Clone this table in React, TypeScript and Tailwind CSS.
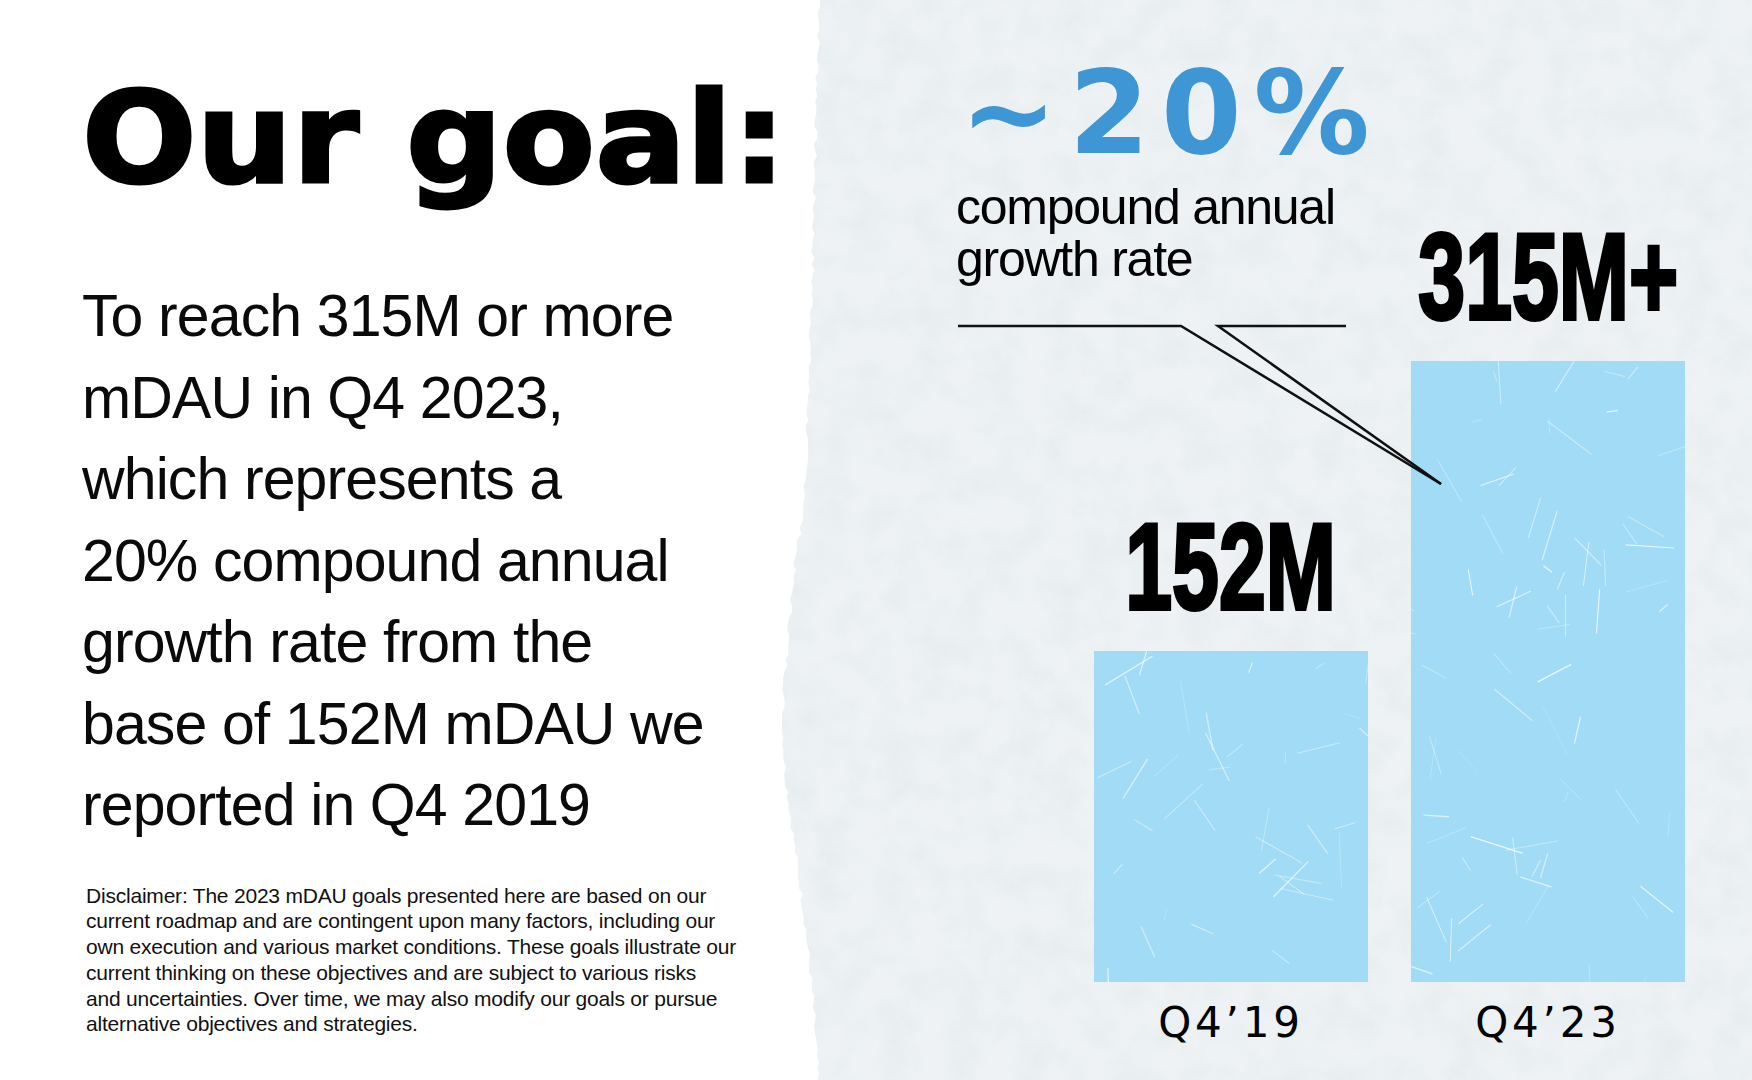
import React from 'react';

const bodyLines = [
  'To reach 315M or more',
  'mDAU in Q4 2023,',
  'which represents a',
  '20% compound annual',
  'growth rate from the',
  'base of 152M mDAU we',
  'reported in Q4 2019',
];

const disclaimerLines = [
  'Disclaimer: The 2023 mDAU goals presented here are based on our',
  'current roadmap and are contingent upon many factors, including our',
  'own execution and various market conditions. These goals illustrate our',
  'current thinking on these objectives and are subject to various risks',
  'and uncertainties. Over time, we may also modify our goals or pursue',
  'alternative objectives and strategies.',
];

// small seeded random so the drawing is the same every load
const rand = (seed: number) => {
  let s = seed;
  return () => {
    s = (s * 9301 + 49297) % 233280;
    return s / 233280;
  };
};

// torn paper edge, points given as [x, y] inside the 40px strip
const edgeKeys: [number, number][] = [
  [38, 0], [35, 80], [32, 200], [30, 300], [26, 400], [23, 500], [13, 560],
  [6, 640], [0, 720], [4, 780], [13, 850], [23, 920], [30, 990], [36, 1080],
];

const tornEdge = () => {
  const r = rand(7);
  const pts: string[] = ['0,0'];
  for (let y = 0; y <= 1080; y += 6) {
    let i = 0;
    while (i < edgeKeys.length - 2 && edgeKeys[i + 1][1] < y) i++;
    const [x0, y0] = edgeKeys[i];
    const [x1, y1] = edgeKeys[i + 1];
    const t = Math.min(1, Math.max(0, (y - y0) / (y1 - y0)));
    const x = x0 + (x1 - x0) * t + (r() - 0.5) * 4;
    pts.push(`${x.toFixed(1)},${y}`);
  }
  pts.push('0,1080');
  return pts.join(' ');
};

const Scratches = ({ seed, height }: { seed: number; height: number }) => {
  const r = rand(seed);
  const lines = Array.from({ length: Math.round(height / 9) }, () => {
    const x = r() * 274;
    const y = r() * height;
    const len = 6 + r() * 50;
    const a = r() * Math.PI * 2;
    return {
      x1: x,
      y1: y,
      x2: x + Math.cos(a) * len,
      y2: y + Math.sin(a) * len,
      o: 0.25 + r() * 0.55,
      w: 0.5 + r() * 1,
    };
  });
  return (
    <svg className="absolute inset-0" width="274" height={height} viewBox={`0 0 274 ${height}`}>
      {lines.map((l, i) => (
        <line key={i} x1={l.x1} y1={l.y1} x2={l.x2} y2={l.y2} stroke="#fff" strokeOpacity={l.o} strokeWidth={l.w} strokeLinecap="round" />
      ))}
    </svg>
  );
};

const Bar = ({ value, label, height, seed }: { value: string; label: string; height: number; seed: number }) => (
  <div className="flex flex-col items-center">
    <div className="mb-[23px] whitespace-nowrap font-['Liberation_Sans',Arial,sans-serif] text-[122px] font-bold leading-none text-black scale-x-[0.69] [-webkit-text-stroke:4px_#000]">
      {value}
    </div>
    <div className="relative w-[274px] overflow-hidden bg-[#a1dbf5]" style={{ height }}>
      <Scratches seed={seed} height={height} />
    </div>
    <div className="mt-[20px] whitespace-nowrap font-['DejaVu_Sans',sans-serif] text-[42px] leading-none tracking-[0.09em] text-black">
      {label}
    </div>
  </div>
);

export default function App() {
  return (
    <div className="flex h-[1080px] w-[1752px] overflow-hidden bg-[#eef2f4]">
      {/* left: white text column */}
      <div className="flex w-[782px] shrink-0 flex-col bg-white pl-[82px] pt-[76px] text-black">
        <h1 className="origin-left scale-x-[1.07] whitespace-nowrap font-['DejaVu_Sans',sans-serif] text-[126px] font-bold leading-none [-webkit-text-stroke:3px_#000]">
          Our goal:
        </h1>
        <p className="mt-[74px] font-['Liberation_Sans',Arial,sans-serif] text-[59px] leading-[81.5px] tracking-[-0.015em] text-[#0a0a0a]">
          {bodyLines.map((line) => (
            <span key={line} className="block whitespace-nowrap">
              {line}
            </span>
          ))}
        </p>
        <p className="ml-[4px] mt-[36px] font-['Liberation_Sans',Arial,sans-serif] text-[21px] leading-[25.8px] tracking-[-0.01em] text-[#111]">
          {disclaimerLines.map((line) => (
            <span key={line} className="block whitespace-nowrap">
              {line}
            </span>
          ))}
        </p>
      </div>

      {/* right: chart on paper */}
      <div className="relative flex-1">
        <svg className="absolute inset-0" width="970" height="1080">
          <filter id="paper">
            <feTurbulence type="fractalNoise" baseFrequency="0.03" numOctaves="4" seed="3" />
            <feColorMatrix type="matrix" values="0 0 0 0 0.6  0 0 0 0 0.68  0 0 0 0 0.72  1.6 0 0 0 -0.6" />
          </filter>
          <rect width="970" height="1080" filter="url(#paper)" opacity="0.25" />
        </svg>
        <svg className="absolute left-0 top-0" width="40" height="1080" viewBox="0 0 40 1080">
          <polygon points={tornEdge()} fill="#fff" />
        </svg>

        <div className="relative grid h-full grid-cols-[174px_138px_274px_43px_274px_67px] grid-rows-[auto_1fr] pb-[36px] pt-[55px]">
          <div className="col-span-4 col-start-2 row-start-1">
            <div className="ml-[4px] whitespace-nowrap font-['DejaVu_Sans',sans-serif] text-[116px] font-bold leading-none tracking-[0.1em] text-[#3e96d4]">
              ~20%
            </div>
            <div className="mt-[10px] font-['Liberation_Sans',Arial,sans-serif] text-[50px] leading-[52px] tracking-[-0.025em] text-black">
              <span className="block whitespace-nowrap">compound annual</span>
              <span className="block whitespace-nowrap">growth rate</span>
            </div>
          </div>

          <div className="col-start-3 row-start-2 self-end">
            <Bar value="152M" label="Q4’19" height={331} seed={11} />
          </div>
          <div className="col-start-5 row-span-2 row-start-1 self-end">
            <Bar value="315M+" label="Q4’23" height={621} seed={23} />
          </div>
        </div>

        {/* pointer from the growth rate caption to the taller bar */}
        <svg className="pointer-events-none absolute inset-0" width="970" height="1080" viewBox="0 0 970 1080">
          <polyline points="176,326 399,326 659,484" fill="none" stroke="#111" strokeWidth="2.5" />
          <polyline points="564,326 436,326 659,484" fill="none" stroke="#111" strokeWidth="2.5" />
        </svg>
      </div>
    </div>
  );
}
